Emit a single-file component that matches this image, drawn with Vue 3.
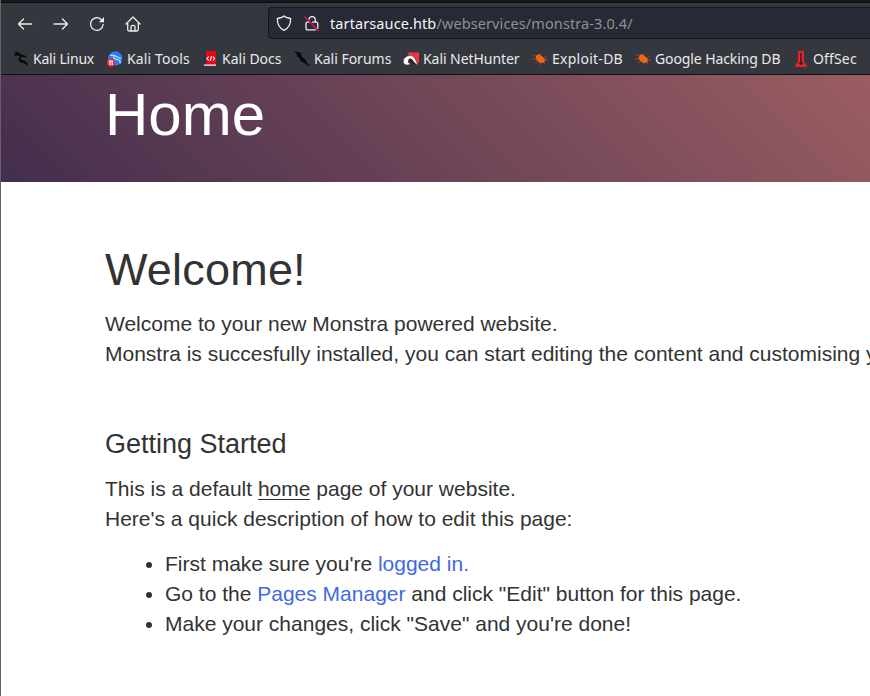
<script setup>
const bookmarks = [
  { id: 'linux', name: 'Kali Linux', width: 94, spacing: -0.2 },
  { id: 'tools', name: 'Kali Tools', width: 95, spacing: 0.14 },
  { id: 'docs', name: 'Kali Docs', width: 92, spacing: 0 },
  { id: 'forums', name: 'Kali Forums', width: 109, spacing: 0 },
  { id: 'hunter', name: 'Kali NetHunter', width: 129, spacing: -0.06 },
  { id: 'bug', name: 'Exploit-DB', width: 103, spacing: 0.26 },
  { id: 'bug', name: 'Google Hacking DB', width: 158, spacing: -0.1 },
  { id: 'offsec', name: 'OffSec', width: 66, spacing: 0.15 },
]
</script>

<template>
  <div class="window">
    <div class="tabs"></div>
    <header class="chrome">
      <nav class="toolbar">
        <div class="controls">
          <svg viewBox="0 0 16 16"><path d="M14.500 8H1.500M6.500 3 1.500 8l5 5" /></svg>
          <svg viewBox="0 0 16 16"><path d="M1 8h13.500M9.500 3l5 5-5 5" /></svg>
          <svg viewBox="0 0 16 16"><path d="M12.400 3.700A6.300 6.300 0 1 0 14.100 8.500" /><path class="solid" d="M15 1v5.200H9.800z" /></svg>
          <svg viewBox="0 0 16 16"><path d="M1 8 8 1l7 7M2.700 7v6.500q0 1.500 1.500 1.500h7.600q1.500 0 1.500-1.500V7M6 15v-4q0-1.600 2-1.600t2 1.600v4" /></svg>
        </div>
        <div class="address">
          <svg viewBox="0 0 16 16"><path d="M8 1C6 2.800 3.500 3 1.400 3.500C1.200 9 3.200 13 8 15.300c4.800-2.300 6.800-6.300 6.600-11.800C12.500 3 10 2.800 8 1z" /></svg>
          <svg class="lock" viewBox="0 0 16 16"><path d="M5 4.200a3.200 3.200 0 0 1 6.300.3V7M8.500 7.200h3.800q1.500 0 1.500 1.500v4.600M11.500 14.800h-8Q2 14.800 2 13.300V8.700q0-1.500 1.500-1.500H5" /><path class="slash" d="m1 2 13 13.500" /></svg>
          <span class="url"><b>tartarsauce.htb</b>/webservices/monstra-3.0.4/</span>
        </div>
      </nav>
      <nav class="bookmarks">
        <a v-for="item in bookmarks" :key="item.name" class="bookmark" :style="{ width: item.width + 'px', letterSpacing: item.spacing + 'px' }">
          <svg viewBox="0 0 16 16">
            <g v-if="item.id === 'linux'">
              <path class="ink" d="M0 .5 6 1.500 8 3.500 12 4.500 14.500 7 11 6 8.500 6 7.500 8.500 11 9.500 14 11.500 15.500 15.500 12 12.500 6.500 11 5.500 8 7 5 4 4.500 0 5.500 3 3.500 0 3 3 2.300z" />
            </g>
            <g v-else-if="item.id === 'tools'">
              <circle cx="8.300" cy="7.500" r="7.200" fill="#287df4" />
              <path d="M3 4.500q4-1.500 8 2l3 1M7 5q-1 3 3 3.500t3 4" stroke="#d5e5ff" fill="none" stroke-width="1.200" />
              <circle cx="4" cy="11.700" r="4.200" fill="#eb2634" />
              <path d="M1.700 10h4.600M3 10v4M5.200 10v4" stroke="#fff" stroke-width="1.200" />
            </g>
            <g v-else-if="item.id === 'docs'">
              <path d="M2 0h12v15H2z" fill="#e50914" />
              <path d="M2 0h1.800v15H2z" fill="#192f70" />
              <path d="M2 13.300h12V15H2z" fill="#d9bfc5" />
              <path d="m6.800 5.500-1.800 2 1.800 2m4-4 1.800 2-1.800 2M9.500 5l-1.400 5" fill="none" stroke="#fff" stroke-width="1.100" />
            </g>
            <g v-else-if="item.id === 'forums'">
              <path class="ink" d="m0 0 7 2 1 4 3 2 2 4 3 3-3-.5-3-3-3-1-1-3-4-3H4z" />
            </g>
            <g v-else-if="item.id === 'hunter'">
              <path d="M4 1.500h12v10L13 14z" fill="#f43342" />
              <path d="M1 13Q-1 8 3.500 5.500q5-2.500 8 1.500l3.500 7-4-2.500Q9 7.500 5.500 9.500q-1.500 2 2 3.500-3 2-6.500 0z" fill="#fff" stroke="#222" stroke-width=".4" />
              <path d="M5 9q3-3 5 .5l3 4.500q-4-1-5-4z" fill="#25212a" />
            </g>
            <g v-else-if="item.id === 'bug'">
              <path d="M4 5q2-3 5-.5l3 2.500q2 2 0 4.500-3 1.500-6-1Q3 8 4 5z" fill="#ed6812" />
              <path d="M1 3.500 4 5M0 8h4m-1 4 3-2m2 4v-3m4-4 3-2m-3 4h4m-5 2 2 2M8 4l1-2" stroke="#ae501c" fill="none" stroke-width=".8" />
            </g>
            <g v-else>
              <path d="M5 0h6v10l3.500 6h-13L5 10z" fill="#e42428" />
              <path d="m7.300 2.500.7-1 .7 1V11l2.500 2-2.500-.4V14H7.300v-1.400L4.800 13l2.500-2z" fill="#251f25" />
            </g>
          </svg>
          <span>{{ item.name }}</span>
        </a>
      </nav>
    </header>
    <section class="hero"><h1>Home</h1></section>
    <main class="content">
      <h2>Welcome!</h2>
      <p>Welcome to your new Monstra powered website.<br />Monstra is succesfully installed, you can start editing the content and customising y</p>
      <h3>Getting Started</h3>
      <p>This is a default <span class="underlined">home</span> page of your website.<br />Here's a quick description of how to edit this page:</p>
      <ul>
        <li>First make sure you're <a>logged in.</a></li>
        <li>Go to the <a>Pages Manager</a> and click "Edit" button for this page.</li>
        <li>Make your changes, click "Save" and you're done!</li>
      </ul>
    </main>
  </div>
</template>

<style>
body { margin: 0; overflow: hidden; background: #fff; }
</style>

<style scoped>
.window { box-sizing: border-box; width: 870px; height: 696px; overflow: hidden; border-left: 1px solid #626262; }
.tabs { height: 3px; background: #17181d; box-sizing: border-box; border-bottom: 1px solid #0c0c10; }
.chrome { height: 72px; box-sizing: border-box; background: #35373f; border-bottom: 1px solid #101116; font-family: "Noto Sans", sans-serif; color: #e9e9eb; }
.toolbar { display: flex; height: 40px; padding-top: 4px; box-sizing: border-box; }
.controls { display: flex; width: 267px; box-sizing: border-box; padding: 9px 0 0 16px; gap: 20px; }
svg { display: block; width: 16px; height: 16px; flex: none; }
.controls svg, .address svg { fill: none; stroke: #eeeef0; stroke-width: 1.3; stroke-linecap: round; stroke-linejoin: round; }
.controls .solid { fill: #eeeef0; stroke: none; }
.address { flex: 1; display: flex; align-items: center; height: 32px; box-sizing: border-box; background: #272934; border: 1px solid #15161b; border-right: 0; border-radius: 4px 0 0 4px; padding-left: 7px; gap: 12px; }
.address .slash { stroke: #e5174f; }
.url { font-size: 14.5px; letter-spacing: .1px; color: #8f9097; white-space: nowrap; margin-left: -2px; }
.url b { font-weight: 400; color: #f6f6f8; }
.bookmarks { display: flex; height: 31px; align-items: center; padding-left: 12px; }
.bookmark { display: flex; flex: none; align-items: center; gap: 4px; font-size: 14px; line-height: 20px; white-space: nowrap; }
.ink { fill: #08090b; }
.hero { height: 107px; background: linear-gradient(45deg, #432e4d, #9b5d62); overflow: hidden; }
h1, h2, h3, p, ul { margin: 0; font-weight: 400; }
h1 { color: #fff; font: 60px/80px "Liberation Sans", sans-serif; padding-left: 104px; }
.content { padding: 58px 0 0 104px; font: 21px/30px "Liberation Sans", sans-serif; color: #333; white-space: nowrap; }
h2 { font-size: 45px; line-height: 60px; margin-bottom: 9px; letter-spacing: .2px; }
h3 { font-size: 27px; line-height: 36px; margin: 57px 0 12px; }
.underlined { box-shadow: inset 0 -1px #333; display: inline-block; line-height: 23px; }
ul { padding-left: 60px; margin-top: 15px; }
a { color: inherit; }
ul a { color: #4169e1; }
</style>
